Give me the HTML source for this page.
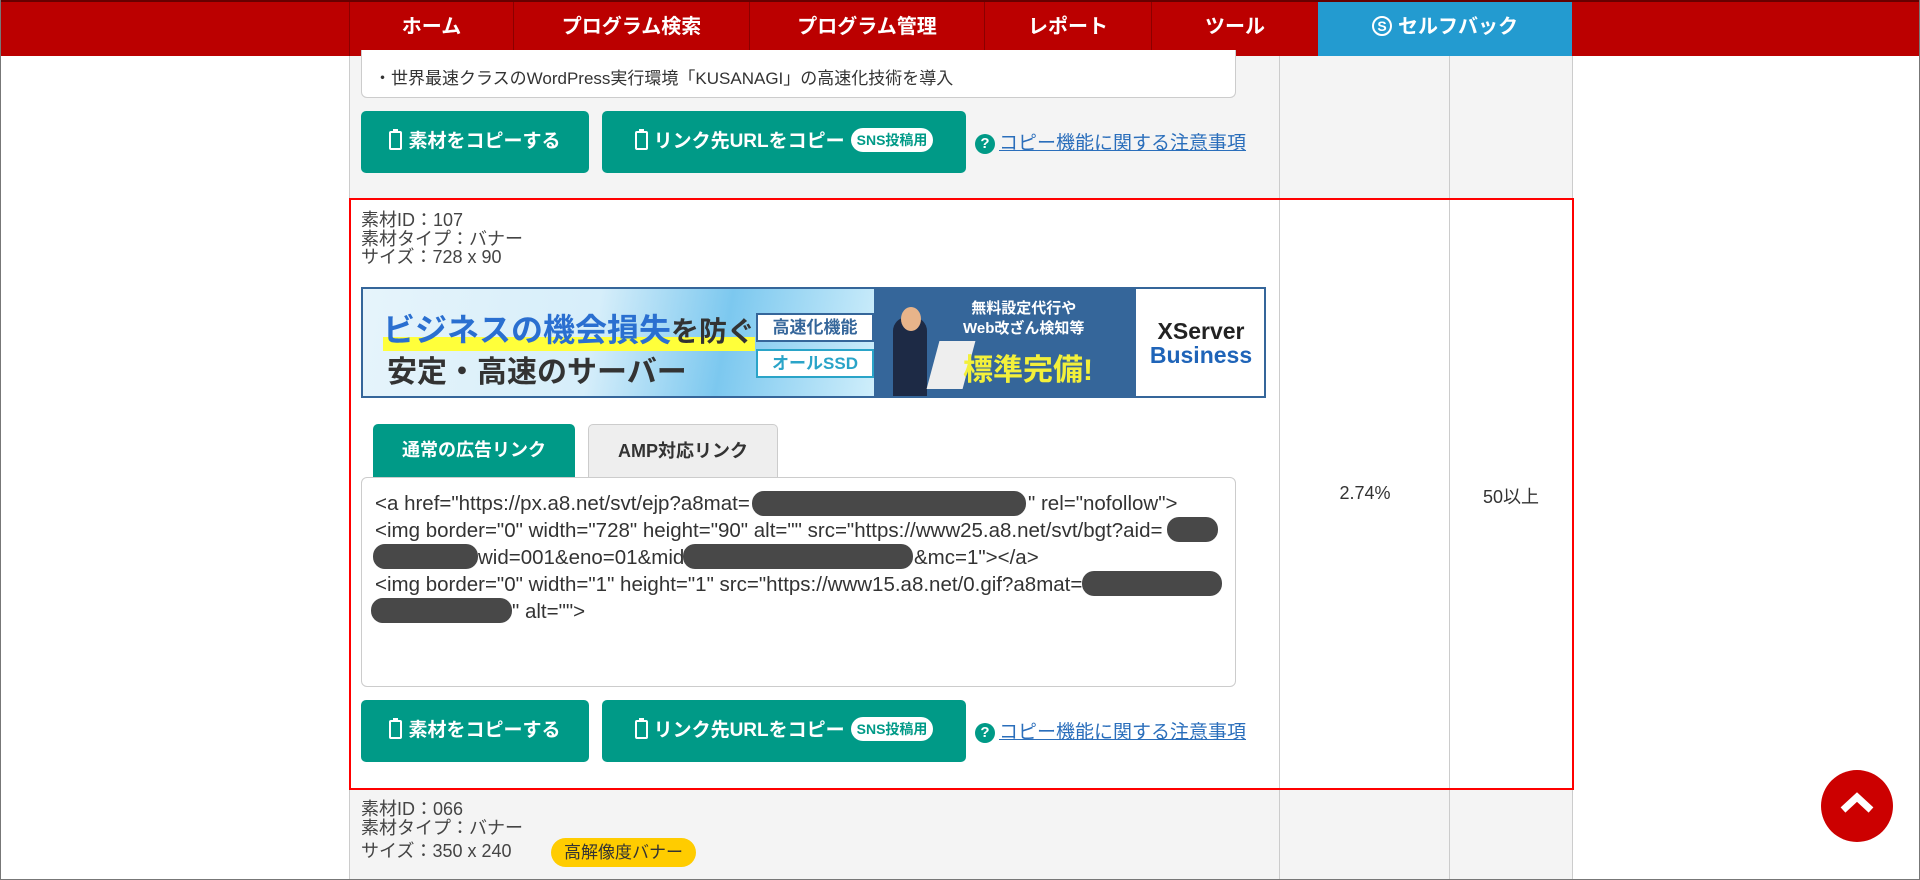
<!DOCTYPE html>
<html><head><meta charset="utf-8"><style>
*{margin:0;padding:0;box-sizing:border-box}
body{width:1920px;height:880px;overflow:hidden;background:#fff;font-family:"Liberation Sans","Noto Sans CJK JP",sans-serif;color:#333;position:relative}
.frame{position:absolute;left:0;top:0;width:1920px;height:880px;border:1px solid #777;border-top:none;z-index:20;pointer-events:none}
.nav{position:absolute;left:0;top:0;width:1920px;height:56px;background:#bb0000;border-top:2px solid #600}
.nav div{position:absolute;top:0;height:54px;line-height:50px;color:#fff;font-weight:bold;font-size:20px;text-align:center;border-left:1px solid #8a0000}
.abs{position:absolute}
.col{position:absolute;top:56px;bottom:0;border-left:1px solid #ccc}
.ta{position:absolute;background:#fff;border:1px solid #ccc;border-radius:6px}
.btn{position:absolute;background:#009a87;border-radius:5px;color:#fff;font-weight:bold;font-size:19px;line-height:62px;text-align:center;white-space:nowrap}
.clip{display:inline-block;width:13px;height:19px;border:2px solid #fff;border-radius:2px;vertical-align:-3px;margin-right:6px;position:relative}
.clip:before{content:"";position:absolute;left:2px;top:-4px;width:5px;height:4px;background:#fff}
.sns{display:inline-block;background:#fff;color:#009a87;font-size:14px;line-height:24px;border-radius:12px;padding:0 6px;margin-left:6px;vertical-align:2px}
.lnk{position:absolute;color:#2a6ebb;text-decoration:underline;font-size:19px;white-space:nowrap}
.q{display:inline-block;width:20px;height:20px;border-radius:50%;background:#009a87;color:#fff;font-size:15px;line-height:20px;text-align:center;text-decoration:none;font-weight:bold;margin-right:4px;vertical-align:1px}
.info{position:absolute;font-size:18px;line-height:18.5px;color:#444}
.code{position:absolute;font-size:20.5px;color:#333;white-space:nowrap;line-height:27px}
.blob{position:absolute;background:#484848;border-radius:12px;height:25px}
</style></head><body>
<div class="abs" style="left:349px;top:56px;width:1224px;height:824px;background:#f4f4f4"></div>
<div class="abs" style="left:349px;top:198px;width:1224px;height:591px;background:#fff"></div>
<div class="col" style="left:349px"></div>
<div class="col" style="left:1279px"></div>
<div class="col" style="left:1449px"></div>
<div class="col" style="left:1572px"></div>

<div class="nav">
<div style="left:349px;width:164px">ホーム</div>
<div style="left:513px;width:236px">プログラム検索</div>
<div style="left:749px;width:235px">プログラム管理</div>
<div style="left:984px;width:167px">レポート</div>
<div style="left:1151px;width:167px">ツール</div>
<div style="left:1318px;width:254px;background:#239bd0;border-left:none"><span style="display:inline-block;width:20px;height:20px;border:2px solid #fff;border-radius:50%;font-size:14px;line-height:16px;vertical-align:2px;margin-right:6px">S</span>セルフバック</div>
</div>

<!-- top row -->
<div class="ta" style="left:361px;top:50px;width:875px;height:48px;border-top:none;border-radius:0 0 6px 6px;overflow:hidden"><div style="position:absolute;left:12px;top:14px;font-size:17px;white-space:nowrap">・世界最速クラスのWordPress実行環境「KUSANAGI」の高速化技術を導入</div></div>
<div class="btn" style="left:361px;top:111px;width:228px"><span class="clip"></span>素材をコピーする</div>
<div class="btn" style="left:602px;top:111px;width:364px"><span class="clip"></span>リンク先URLをコピー<span class="sns">SNS投稿用</span></div>
<div class="lnk" style="left:975px;top:128px"><span class="q">?</span>コピー機能に関する注意事項</div>

<!-- selected row -->
<div class="abs" style="left:349px;top:198px;width:1225px;height:592px;border:2px solid #f00;z-index:5"></div>
<div class="info" style="left:361px;top:211px">素材ID：107<br>素材タイプ：バナー<br>サイズ：728 x 90</div>

<div class="abs" style="left:361px;top:287px;width:905px;height:111px;border:2px solid #35669a;overflow:hidden">
 <div class="abs" style="left:0;top:0;width:511px;height:107px;background:linear-gradient(100deg,#e6f4fb 0%,#d6eefa 45%,#7cc8ef 70%,#cfeefb 100%)"></div>
 <div class="abs" style="left:20px;top:16px;font-size:32px;font-weight:bold;color:#2a6fd0;white-space:nowrap;background:linear-gradient(transparent 70%,#ffff3a 70%)">ビジネスの機会損失<span style="color:#333;font-size:28px">を防ぐ</span></div>
 <div class="abs" style="left:24px;top:58px;font-size:30px;font-weight:bold;color:#333;white-space:nowrap">安定・高速のサーバー</div>
 <div class="abs" style="left:393px;top:24px;width:118px;height:29px;border:2px solid #35669a;background:#fff;font-size:17px;font-weight:bold;color:#35669a;text-align:center;line-height:25px">高速化機能</div>
 <div class="abs" style="left:393px;top:60px;width:118px;height:29px;border:2px solid #2aa4c8;background:#fff;font-size:17px;font-weight:bold;color:#2aa4c8;text-align:center;line-height:25px">オールSSD</div>
 <div class="abs" style="left:511px;top:0;width:262px;height:107px;background:#35669a"></div>
 <div class="abs" style="left:530px;top:28px;width:34px;height:80px;background:#1d2a45;border-radius:14px 14px 0 0"></div>
 <div class="abs" style="left:538px;top:18px;width:20px;height:24px;background:#e8b48a;border-radius:50%"></div>
 <div class="abs" style="left:570px;top:52px;width:36px;height:48px;background:#eee;transform:skewX(-15deg)"></div>
 <div class="abs" style="left:600px;top:10px;font-size:15px;font-weight:bold;color:#fff;line-height:20px;text-align:center;white-space:nowrap">無料設定代行や<br>Web改ざん検知等</div>
 <div class="abs" style="left:600px;top:56px;font-size:30px;font-weight:bold;color:#f3f03a;white-space:nowrap">標準完備!</div>
 <div class="abs" style="left:773px;top:0;width:130px;height:107px;background:#fff"></div>
 <div class="abs" style="left:773px;top:30px;width:130px;text-align:center;font-size:23px;font-weight:bold;line-height:24px;color:#222">XServer<br><span style="color:#1f64b8">Business</span></div>
</div>

<div class="abs" style="left:373px;top:424px;width:202px;height:54px;background:#009a87;border-radius:5px 5px 0 0;color:#fff;font-weight:bold;font-size:18px;text-align:center;line-height:52px">通常の広告リンク</div>
<div class="abs" style="left:588px;top:424px;width:190px;height:54px;background:#eee;border:1px solid #ccc;border-bottom:none;border-radius:5px 5px 0 0;color:#333;font-weight:bold;font-size:18px;text-align:center;line-height:52px">AMP対応リンク</div>
<div class="ta" style="left:361px;top:477px;width:875px;height:210px"></div>
<div class="code" style="left:375px;top:490px">&lt;a href="https://px.a8.net/svt/ejp?a8mat=</div>
<div class="code" style="left:1028px;top:490px">" rel="nofollow"&gt;</div>
<div class="code" style="left:375px;top:517px">&lt;img border="0" width="728" height="90" alt="" src="https://www25.a8.net/svt/bgt?aid=</div>
<div class="code" style="left:478px;top:544px">wid=001&amp;eno=01&amp;mid=</div>
<div class="code" style="left:914px;top:544px">&amp;mc=1"&gt;&lt;/a&gt;</div>
<div class="code" style="left:375px;top:571px">&lt;img border="0" width="1" height="1" src="https://www15.a8.net/0.gif?a8mat=</div>
<div class="code" style="left:512px;top:598px">" alt=""&gt;</div>
<div class="blob" style="left:752px;top:491px;width:274px"></div>
<div class="blob" style="left:1167px;top:517px;width:51px"></div>
<div class="blob" style="left:373px;top:544px;width:105px"></div>
<div class="blob" style="left:683px;top:544px;width:230px"></div>
<div class="blob" style="left:1082px;top:571px;width:140px"></div>
<div class="blob" style="left:371px;top:598px;width:141px"></div>

<div class="btn" style="left:361px;top:700px;width:228px"><span class="clip"></span>素材をコピーする</div>
<div class="btn" style="left:602px;top:700px;width:364px"><span class="clip"></span>リンク先URLをコピー<span class="sns">SNS投稿用</span></div>
<div class="lnk" style="left:975px;top:717px"><span class="q">?</span>コピー機能に関する注意事項</div>

<!-- bottom row -->
<div class="info" style="left:361px;top:800px">素材ID：066<br>素材タイプ：バナー</div>
<div class="info" style="left:361px;top:842px">サイズ：350 x 240</div>
<div class="abs" style="left:551px;top:838px;width:145px;height:29px;background:#ffcc00;border-radius:15px;font-size:17px;line-height:29px;text-align:center;color:#333">高解像度バナー</div>

<div class="abs" style="left:1280px;top:483px;width:170px;text-align:center;font-size:18px">2.74%</div>
<div class="abs" style="left:1450px;top:483px;width:122px;text-align:center;font-size:18px">50以上</div>

<div class="abs" style="left:1821px;top:770px;width:72px;height:72px;border-radius:50%;background:#cc0000">
<svg width="72" height="72" viewBox="0 0 72 72"><path d="M22 40 L36 27 L50 40" fill="none" stroke="#fff" stroke-width="7"/></svg></div>
<div class="frame"></div>
</body></html>
